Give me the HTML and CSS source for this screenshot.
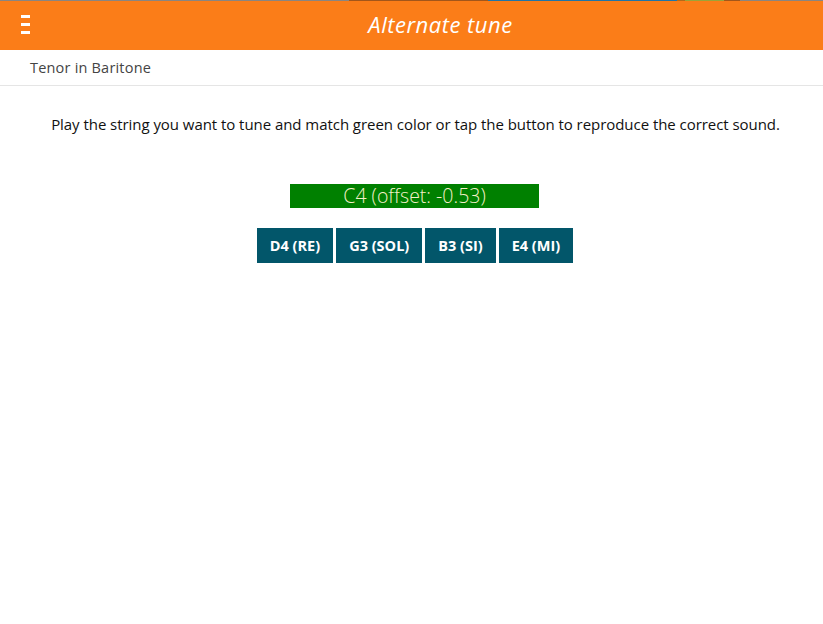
FILE: index.html
```html
<!DOCTYPE html>
<html>
<head>
<meta charset="utf-8">
<link rel="stylesheet" href="styles.css">
</head>
<body>
<div class="strip"></div>
<header class="topbar">
  <div class="menu"><span></span><span></span><span></span></div>
  <h1 class="title">Alternate tune</h1>
</header>
<div class="subbar">Tenor in Baritone</div>
<main class="content">
  <p class="hint">Play the string you want to tune and match green color or tap the button to reproduce the correct sound.</p>
  <div class="note">C4 (offset: -0.53)</div>
  <div class="buttons">
    <button class="btn">D4 (RE)</button>
    <button class="btn">G3 (SOL)</button>
    <button class="btn">B3 (SI)</button>
    <button class="btn">E4 (MI)</button>
  </div>
</main>
</body>
</html>
```
FILE: styles.css
```css
html, body {
  margin: 0;
  padding: 0;
  background: #fff;
  font-family: "Open Sans", "Noto Sans", sans-serif;
}
.strip {
  height: 1px;
  background: linear-gradient(to right, #8a8580 0, #8a8580 349px, #a3561a 349px, #a3561a 488px, #1f74a8 488px, #1f74a8 677px, #b36a1a 677px, #b36a1a 685px, #9aa33a 685px, #9aa33a 724px, #a3561a 724px, #a3561a 740px, #8a8580 740px);
}
.topbar {
  height: 49px;
  background: #fb7d18;
  position: relative;
  display: flex;
  align-items: center;
  justify-content: center;
}
.menu {
  position: absolute;
  left: 21px;
  top: 14px;
  display: flex;
  flex-direction: column;
  gap: 5px;
}
.menu span {
  display: block;
  width: 9px;
  height: 3px;
  background: #fff;
}
.title {
  margin: 0 0 4px 0;
  padding-left: 58px;
  font-size: 22px;
  font-weight: 400;
  font-style: italic;
  color: #fff;
  letter-spacing: 0.5px;
}
.subbar {
  height: 36px;
  box-sizing: border-box;
  border-bottom: 1px solid #e5e5e5;
  padding-left: 30px;
  display: flex;
  align-items: center;
  font-size: 14.5px;
  letter-spacing: 0.2px;
  color: #444;
}
.content {
  display: flex;
  flex-direction: column;
  align-items: center;
}
.hint {
  margin: 28px 0 0;
  padding-left: 8px;
  font-size: 15px;
  font-weight: 500;
  color: #111;
  letter-spacing: -0.05px;
}
.note {
  margin-top: 50px;
  width: 249px;
  height: 24px;
  background: #008000;
  color: #f5f0c8;
  font-size: 19.5px;
  font-weight: 300;
  line-height: 24px;
  text-align: center;
  margin-left: 6px;
}
.buttons {
  margin-top: 20px;
  display: flex;
  gap: 3px;
  margin-left: 7px;
}
.btn {
  border: none;
  margin: 0;
  height: 35px;
  padding: 0 13px;
  background: #02566a;
  color: #fff;
  font-family: inherit;
  font-size: 14.5px;
  font-weight: 700;
}
```
